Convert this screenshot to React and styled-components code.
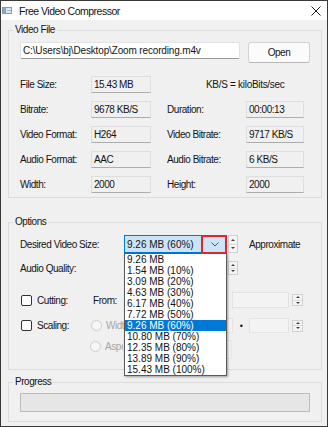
import React from "react";
import styled, { createGlobalStyle } from "styled-components";

const GlobalStyle = createGlobalStyle`
  html, body {
    margin: 0;
    padding: 0;
    background: #ffffff;
  }
  body {
    font-family: "Liberation Sans", Arial, sans-serif;
    font-size: 10px;
  }
  * {
    box-sizing: border-box;
  }
`;

const Window = styled.div`
  width: 328px;
  height: 427px;
  border: 1px solid #3a3a3a;
  background: #f0f0f0;
  display: flex;
  flex-direction: column;
  color: #141414;
  letter-spacing: -0.45px;
  overflow: hidden;
`;

const TitleBar = styled.div`
  height: 19px;
  flex: none;
  background: #ffffff;
  display: flex;
  align-items: center;
  padding: 0 6px 0 1px;
  .title {
    margin-left: 7px;
    font-size: 10.5px;
    letter-spacing: -0.5px;
    flex: 1;
  }
`;

const Body = styled.div`
  flex: 1;
  display: flex;
  flex-direction: column;
  padding: 0 5px 0 7px;
`;

const Group = styled.fieldset`
  margin: ${p => p.$mt}px 0 0 0;
  border: 1px solid #dcdcdc;
  padding: ${p => p.$pt}px 11px ${p => p.$pb}px 11px;
  min-width: 0;

  legend {
    margin-left: -7px;
    padding: 0 2px;
    line-height: 12px;
    font-size: 10px;
  }
`;

const PathRow = styled.div`
  display: flex;
  align-items: flex-start;
  gap: 8px;
`;

const PathInput = styled.div`
  width: 220px;
  height: 17px;
  background: #ffffff;
  border: 1px solid #e2e2e2;
  border-bottom-color: #9a9a9a;
  border-radius: 2px;
  padding-left: 2px;
  line-height: 15px;
  letter-spacing: -0.15px;
  white-space: nowrap;
  overflow: hidden;
`;

const Button = styled.div`
  width: 62px;
  height: 21px;
  background: #fbfbfb;
  border: 1px solid #d3d3d3;
  border-bottom-color: #b8b8b8;
  border-radius: 3px;
  display: flex;
  align-items: center;
  justify-content: center;
`;

const InfoGrid = styled.div`
  margin-top: 13px;
  display: grid;
  grid-template-columns: 71px 60px 16px 79px 58px;
  grid-auto-rows: 17px;
  row-gap: 8px;
  align-items: center;
`;

const Label = styled.div`
  grid-column: ${p => p.$col};
  white-space: nowrap;
`;

const Note = styled.div`
  grid-column: 4 / 6;
  padding-left: 39px;
  letter-spacing: -0.3px;
  white-space: nowrap;
`;

const ValueBox = styled.div`
  grid-column: ${p => p.$col};
  height: 17px;
  background: #f0f0f0;
  border: 1px solid #dedede;
  border-bottom-color: #adadad;
  padding-left: 2px;
  line-height: 15px;
  white-space: nowrap;
`;

const OptRow = styled.div`
  display: flex;
  align-items: ${p => p.$align || "center"};
  height: ${p => p.$h}px;
  margin-top: ${p => p.$mt || 0}px;
`;

const OptLabel = styled.div`
  width: ${p => p.$w}px;
  flex: none;
  white-space: nowrap;
  overflow: hidden;
  margin-left: ${p => p.$ml || 0}px;
  margin-top: ${p => p.$top || 0}px;
  color: ${p => (p.$disabled ? "#a6a6a6" : "inherit")};
`;

const ComboWrap = styled.div`
  position: relative;
  width: 102px;
  height: ${p => p.$h}px;
  flex: none;
`;

const Combo = styled.div`
  width: 100%;
  height: 100%;
  display: flex;
  align-items: center;
  justify-content: space-between;
  padding: 0 6px 0 2px;
  background: ${p => (p.$active ? "#cce4f7" : "#f3f3f3")};
  border: 1px solid ${p => (p.$active ? "#0078d7" : "#d4d4d4")};
  letter-spacing: 0;
`;

const Highlight = styled.div`
  position: absolute;
  top: 0;
  right: -1px;
  width: 26px;
  height: 19px;
  border: 2px solid #e0262c;
  z-index: 3;
`;

const DropList = styled.div`
  position: absolute;
  top: 100%;
  left: 0;
  width: 103px;
  background: #ffffff;
  border: 1px solid #5a5a5a;
  box-shadow: 1px 1px 2px rgba(0, 0, 0, 0.35);
  z-index: 2;
  letter-spacing: 0;
`;

const DropItem = styled.div`
  height: 11px;
  line-height: 11px;
  padding-left: 2px;
  white-space: nowrap;
  background: ${p => (p.$selected ? "#0078d7" : "transparent")};
  color: ${p => (p.$selected ? "#ffffff" : "#111111")};
`;

const Spin = styled.div`
  width: ${p => p.$w || 10}px;
  height: ${p => p.$h}px;
  margin-left: ${p => p.$ml || 0}px;
  flex: none;
  display: flex;
  flex-direction: column;
  border: 1px solid #d0d0d0;
  background: #f4f4f4;

  span {
    flex: 1;
    display: flex;
    align-items: center;
    justify-content: center;
  }
  span + span {
    border-top: 1px solid #dcdcdc;
  }
  i {
    width: 0;
    height: 0;
    border-left: 2px solid transparent;
    border-right: 2px solid transparent;
  }
  .up {
    border-bottom: 2px solid #444;
  }
  .down {
    border-top: 2px solid #444;
  }
`;

const Field = styled.div`
  width: ${p => p.$w}px;
  height: ${p => p.$h}px;
  margin-left: ${p => p.$ml || 0}px;
  flex: none;
  background: #f3f3f3;
  border: 1px solid #e3e3e3;
`;

const Check = styled.span`
  width: 11px;
  height: 11px;
  margin-left: 1px;
  flex: none;
  border: 1px solid #333333;
  border-radius: 2px;
  background: #ffffff;
`;

const Radio = styled.span`
  width: 11px;
  height: 11px;
  flex: none;
  margin-top: ${p => p.$top || 0}px;
  border-radius: 50%;
  border: 1px solid #cccccc;
  background: #f6f6f6;
`;

const Dot = styled.div`
  width: 16px;
  flex: none;
  text-align: center;
  font-size: 9px;
`;

const DisabledCombo = styled.div`
  width: 109px;
  height: 19px;
  margin-left: 0;
  flex: none;
  display: flex;
  align-items: center;
  justify-content: flex-end;
  padding-right: 3px;
  border: 1px solid #e6e6e6;
  background: #f2f2f2;
`;

const ProgressBar = styled.div`
  height: 19px;
  background: #e6e6e6;
  border: 1px solid #bcbcbc;
`;

const Chevron = ({ color = "#555" }) => (
  <svg width="8" height="5" viewBox="0 0 8 5">
    <path d="M0.5 0.5 L4 4 L7.5 0.5" fill="none" stroke={color} strokeWidth="1" />
  </svg>
);

const SpinBox = props => (
  <Spin {...props}>
    <span>
      <i className="up" />
    </span>
    <span>
      <i className="down" />
    </span>
  </Spin>
);

const sizes = [
  "9.26 MB",
  "1.54 MB (10%)",
  "3.09 MB (20%)",
  "4.63 MB (30%)",
  "6.17 MB (40%)",
  "7.72 MB (50%)",
  "9.26 MB (60%)",
  "10.80 MB (70%)",
  "12.35 MB (80%)",
  "13.89 MB (90%)",
  "15.43 MB (100%)"
];

const info = [
  ["Bitrate:", "9678 KB/S", "Duration:", "00:00:13"],
  ["Video Format:", "H264", "Video Bitrate:", "9717 KB/S"],
  ["Audio Format:", "AAC", "Audio Bitrate:", "6 KB/S"],
  ["Width:", "2000", "Height:", "2000"]
];

const App = () => {
  return (
    <>
      <GlobalStyle />
      <Window>
        <TitleBar>
          <svg width="10" height="7" viewBox="0 0 10 7">
            <rect x="0.5" y="0.5" width="9" height="6" fill="#dbe6f2" stroke="#7f9cbd" />
            <rect x="1" y="1" width="3" height="5" fill="#8aa6c6" />
            <rect x="5" y="3" width="4" height="1" fill="#9fb5cf" />
          </svg>
          <span className="title">Free Video Compressor</span>
          <svg width="10" height="10" viewBox="0 0 10 10">
            <path d="M0.5 0.5 L9.5 9.5 M9.5 0.5 L0.5 9.5" stroke="#222" strokeWidth="1" />
          </svg>
        </TitleBar>

        <Body>
          <Group $mt={4} $pt={6} $pb={4}>
            <legend>Video File</legend>
            <PathRow>
              <PathInput>C:\Users\bj\Desktop\Zoom recording.m4v</PathInput>
              <Button>Open</Button>
            </PathRow>
            <InfoGrid>
              <Label $col={1}>File Size:</Label>
              <ValueBox $col={2}>15.43 MB</ValueBox>
              <Note>KB/S = kiloBits/sec</Note>
              {info.map(([l1, v1, l2, v2]) => (
                <React.Fragment key={l1}>
                  <Label $col={1}>{l1}</Label>
                  <ValueBox $col={2}>{v1}</ValueBox>
                  <Label $col={4}>{l2}</Label>
                  <ValueBox $col={5}>{v2}</ValueBox>
                </React.Fragment>
              ))}
            </InfoGrid>
          </Group>

          <Group $mt={18} $pt={7} $pb={9}>
            <legend>Options</legend>
            <OptRow $h={18}>
              <OptLabel $w={104}>Desired Video Size:</OptLabel>
              <ComboWrap $h={18}>
                <Combo $active>
                  <span>9.26 MB (60%)</span>
                  <Chevron />
                </Combo>
                <Highlight />
                <DropList>
                  {sizes.map((s, i) => (
                    <DropItem key={i} $selected={i === 6}>
                      {s}
                    </DropItem>
                  ))}
                </DropList>
              </ComboWrap>
              <SpinBox $h={18} $ml={2} />
              <OptLabel $w={60} $ml={11}>
                Approximate
              </OptLabel>
            </OptRow>

            <OptRow $h={14} $mt={8}>
              <OptLabel $w={104}>Audio Quality:</OptLabel>
              <ComboWrap $h={14}>
                <Combo />
              </ComboWrap>
              <SpinBox $h={14} $ml={2} />
            </OptRow>

            <OptRow $h={16} $mt={17}>
              <Check />
              <OptLabel $w={56} $ml={5}>
                Cutting:
              </OptLabel>
              <OptLabel $w={31}>From:</OptLabel>
              <Field $w={80} $h={16} />
              <Field $w={57} $h={16} $ml={28} />
              <SpinBox $h={12} $w={11} $ml={3} />
            </OptRow>

            <OptRow $h={15} $mt={10}>
              <Check />
              <OptLabel $w={54} $ml={5}>
                Scaling:
              </OptLabel>
              <Radio />
              <OptLabel $w={18} $ml={4} $disabled>
                Width
              </OptLabel>
              <Field $w={109} $h={15} />
              <Dot>•</Dot>
              <Field $w={40} $h={15} />
              <SpinBox $h={12} $w={11} $ml={3} />
            </OptRow>

            <OptRow $h={20} $mt={7} $align="flex-start">
              <OptLabel $w={70} />
              <Radio $top={1} />
              <OptLabel $w={18} $ml={4} $top={1} $disabled>
                Aspect Ratio
              </OptLabel>
              <DisabledCombo>
                <Chevron color="#c4c4c4" />
              </DisabledCombo>
            </OptRow>
          </Group>

          <Group $mt={6} $pt={5} $pb={9}>
            <legend>Progress</legend>
            <ProgressBar />
          </Group>
        </Body>
      </Window>
    </>
  );
};

export default App;
